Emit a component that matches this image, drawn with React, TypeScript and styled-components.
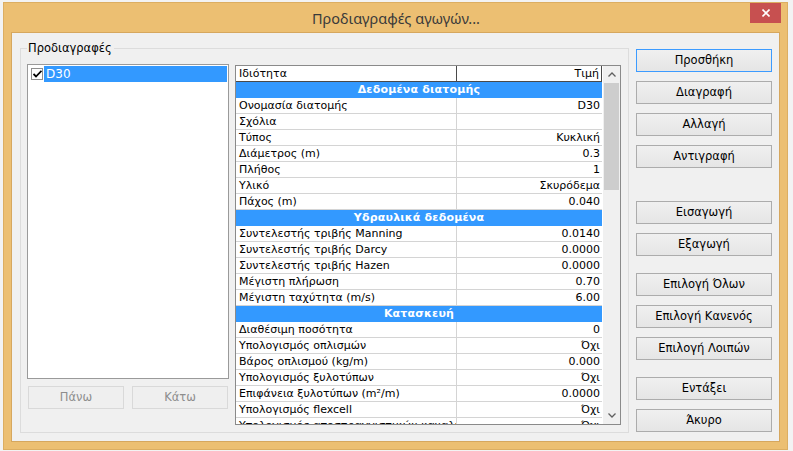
import React from "react";
import styled, { createGlobalStyle } from "styled-components";

const GlobalStyle = createGlobalStyle`
  html, body { margin: 0; padding: 0; width: 793px; height: 451px; overflow: hidden; background: #f0f0f0; }
  * { box-sizing: border-box; }
`;

const Page = styled.div`
  width: 793px;
  height: 451px;
  padding: 2px 0 0 3px;
  background: #f3f3f3;
`;

const Window = styled.div`
  width: 785px;
  height: 448px;
  background: #ecbf72;
  box-shadow: inset 0 0 0 1px #dcae62;
  display: flex;
  flex-direction: column;
  padding: 0 8px 8px 8px;
`;

const TitleBar = styled.div`
  height: 30px;
  display: grid;
  grid-template-columns: 1fr auto 1fr;
  align-items: center;
  margin: 0 -8px;
  padding: 0 7px 0 8px;
`;

const Title = styled.div`
  grid-column: 2;
  font-family: "Noto Sans", sans-serif;
  font-size: 14.5px;
  color: #3a3a3a;
  padding-top: 1px;
`;

const CloseButton = styled.div`
  grid-column: 3;
  justify-self: end;
  align-self: start;
  margin-top: 1px;
  width: 31px;
  height: 20px;
  background: #c75050;
  display: flex;
  align-items: center;
  justify-content: center;
`;

const Client = styled.div`
  flex: 1;
  background: #f0f0f0;
  border: 1px solid #d6a75e;
  display: flex;
  padding: 15px 0 0 8px;
  gap: 7px;
  font-family: "DejaVu Sans", sans-serif;
`;

const GroupBox = styled.div`
  position: relative;
  width: 609px;
  height: 385px;
  border: 1px solid #dcdcdc;
  display: flex;
  gap: 6px;
  padding: 15px 7px 7px 6px;
`;

const GroupLabel = styled.span`
  position: absolute;
  top: -8px;
  left: 6px;
  padding: 0 2px 0 1px;
  background: #f0f0f0;
  font-size: 11.5px;
  line-height: 14px;
  color: #000;
`;

const LeftColumn = styled.div`
  width: 202px;
  display: flex;
  flex-direction: column;
  gap: 7px;
  padding-bottom: 16px;
`;

const ListBox = styled.div`
  flex: 1;
  background: #fff;
  border: 1px solid #9a9a9a;
  padding: 1px 1px 0 3px;
`;

const ListItem = styled.div`
  display: flex;
  align-items: center;
  gap: 1px;
  height: 16px;
`;

const CheckBox = styled.div`
  width: 12px;
  height: 12px;
  border: 1px solid #8f8f8f;
  background: #fff;
  display: flex;
  align-items: center;
  justify-content: center;
  flex: none;
`;

const ItemLabel = styled.div<{ $selected?: boolean }>`
  flex: 1;
  height: 16px;
  background: ${(p) => (p.$selected ? "#3399ff" : "transparent")};
  color: ${(p) => (p.$selected ? "#fff" : "#000")};
  font-size: 12px;
  line-height: 16px;
  padding-left: 2px;
`;

const SmallButtonRow = styled.div`
  display: flex;
  gap: 8px;
  padding-left: 1px;
`;

const Button = styled.div<{ $disabled?: boolean; $default?: boolean; $width?: number; $gapBefore?: number }>`
  width: ${(p) => (p.$width ? `${p.$width}px` : "100%")};
  height: 23px;
  flex: none;
  margin-top: ${(p) => p.$gapBefore ?? 0}px;
  border: 1px solid ${(p) => (p.$disabled ? "#d9d9d9" : p.$default ? "#3c9bff" : "#acacac")};
  background: ${(p) => (p.$disabled ? "#efefef" : "linear-gradient(#f0f0f0, #e5e5e5)")};
  color: ${(p) => (p.$disabled ? "#8d8d8d" : "#000")};
  font-family: "DejaVu Sans", sans-serif;
  font-size: 11.5px;
  display: flex;
  align-items: center;
  justify-content: center;
  padding-bottom: 1px;
`;

const PropertyGrid = styled.div`
  width: 386px;
  height: 360px;
  margin-top: 1px;
  border: 1px solid #8a8a8a;
  background: #fff;
  display: flex;
`;

const GridContent = styled.div`
  width: 366px;
  overflow: hidden;
  display: flex;
  flex-direction: column;
`;

const Row = styled.div`
  display: flex;
  height: 16px;
  flex: none;
  border-bottom: 1px solid #d4d4d4;
  font-size: 11px;
  line-height: 15px;
  color: #000;
`;

const HeaderRow = styled(Row)`
  border-bottom: 1px solid #4a4a4a;
`;

const NameCell = styled.div<{ $header?: boolean }>`
  width: 221px;
  flex: none;
  padding-left: 3px;
  border-right: 1px solid ${(p) => (p.$header ? "#4a4a4a" : "#d4d4d4")};
  white-space: nowrap;
  overflow: hidden;
`;

const ValueCell = styled.div<{ $header?: boolean }>`
  flex: 1;
  text-align: right;
  padding-right: 2px;
  border-right: ${(p) => (p.$header ? "1px solid #4a4a4a" : "none")};
  white-space: nowrap;
`;

const CategoryRow = styled.div`
  height: 16px;
  flex: none;
  background: #3399ff;
  color: #fff;
  font-weight: bold;
  font-size: 11px;
  line-height: 16px;
  text-align: center;
  letter-spacing: 0.2px;
`;

const ScrollBar = styled.div`
  width: 18px;
  border-left: 1px solid #fff;
  background: #f0f0f0;
  display: flex;
  flex-direction: column;
`;

const ScrollArrow = styled.div`
  height: 17px;
  flex: none;
  display: flex;
  align-items: center;
  justify-content: center;
`;

const ScrollTrack = styled.div`
  flex: 1;
  padding: 0 1px;
`;

const ScrollThumb = styled.div`
  height: 107px;
  background: #cdcdcd;
`;

const RightColumn = styled.div`
  width: 136px;
  display: flex;
  flex-direction: column;
  gap: 9px;
  padding-top: 1px;
`;

type Item = { kind: "cat"; label: string } | { kind: "row"; name: string; value: string };

const items: Item[] = [
  { kind: "cat", label: "Δεδομένα διατομής" },
  { kind: "row", name: "Ονομασία διατομής", value: "D30" },
  { kind: "row", name: "Σχόλια", value: "" },
  { kind: "row", name: "Τύπος", value: "Κυκλική" },
  { kind: "row", name: "Διάμετρος (m)", value: "0.3" },
  { kind: "row", name: "Πλήθος", value: "1" },
  { kind: "row", name: "Υλικό", value: "Σκυρόδεμα" },
  { kind: "row", name: "Πάχος (m)", value: "0.040" },
  { kind: "cat", label: "Υδραυλικά δεδομένα" },
  { kind: "row", name: "Συντελεστής τριβής Manning", value: "0.0140" },
  { kind: "row", name: "Συντελεστής τριβής Darcy", value: "0.0000" },
  { kind: "row", name: "Συντελεστής τριβής Hazen", value: "0.0000" },
  { kind: "row", name: "Μέγιστη πλήρωση", value: "0.70" },
  { kind: "row", name: "Μέγιστη ταχύτητα (m/s)", value: "6.00" },
  { kind: "cat", label: "Κατασκευή" },
  { kind: "row", name: "Διαθέσιμη ποσότητα", value: "0" },
  { kind: "row", name: "Υπολογισμός οπλισμών", value: "Όχι" },
  { kind: "row", name: "Βάρος οπλισμού (kg/m)", value: "0.000" },
  { kind: "row", name: "Υπολογισμός ξυλοτύπων", value: "Όχι" },
  { kind: "row", name: "Επιφάνεια ξυλοτύπων (m²/m)", value: "0.0000" },
  { kind: "row", name: "Υπολογισμός flexcell", value: "Όχι" },
  { kind: "row", name: "Υπολογισμός αποστραγγιστικών καναλιών", value: "Όχι" },
];

const rightButtons: { label: string; gap?: number; def?: boolean }[] = [
  { label: "Προσθήκη", def: true },
  { label: "Διαγραφή" },
  { label: "Αλλαγή" },
  { label: "Αντιγραφή" },
  { label: "Εισαγωγή", gap: 24 },
  { label: "Εξαγωγή" },
  { label: "Επιλογή Όλων", gap: 8 },
  { label: "Επιλογή Κανενός" },
  { label: "Επιλογή Λοιπών" },
  { label: "Εντάξει", gap: 8 },
  { label: "Άκυρο" },
];

const Chevron = ({ up }: { up?: boolean }) => (
  <svg width="8" height="5" viewBox="0 0 8 5">
    <polyline
      points={up ? "0.5,4.5 4,1 7.5,4.5" : "0.5,0.5 4,4 7.5,0.5"}
      fill="none"
      stroke="#606060"
      strokeWidth="1.3"
    />
  </svg>
);

export default function App() {
  return (
    <>
      <GlobalStyle />
      <Page>
        <Window>
          <TitleBar>
            <Title>Προδιαγραφές αγωγών...</Title>
            <CloseButton>
              <svg width="8" height="8" viewBox="0 0 8 8">
                <path d="M0.5 0.5 L7.5 7.5 M7.5 0.5 L0.5 7.5" stroke="#fff" strokeWidth="1.6" />
              </svg>
            </CloseButton>
          </TitleBar>
          <Client>
            <GroupBox>
              <GroupLabel>Προδιαγραφές</GroupLabel>
              <LeftColumn>
                <ListBox>
                  <ListItem>
                    <CheckBox>
                      <svg width="9" height="8" viewBox="0 0 9 8">
                        <path d="M0.5 4 L3 6.5 L8.5 0.8" fill="none" stroke="#000" strokeWidth="1.8" />
                      </svg>
                    </CheckBox>
                    <ItemLabel $selected>D30</ItemLabel>
                  </ListItem>
                </ListBox>
                <SmallButtonRow>
                  <Button $disabled $width={96}>Πάνω</Button>
                  <Button $disabled $width={96}>Κάτω</Button>
                </SmallButtonRow>
              </LeftColumn>
              <PropertyGrid>
                <GridContent>
                  <HeaderRow>
                    <NameCell $header>Ιδιότητα</NameCell>
                    <ValueCell $header>Τιμή</ValueCell>
                  </HeaderRow>
                  {items.map((it, i) =>
                    it.kind === "cat" ? (
                      <CategoryRow key={i}>{it.label}</CategoryRow>
                    ) : (
                      <Row key={i}>
                        <NameCell>{it.name}</NameCell>
                        <ValueCell>{it.value}</ValueCell>
                      </Row>
                    )
                  )}
                </GridContent>
                <ScrollBar>
                  <ScrollArrow>
                    <Chevron up />
                  </ScrollArrow>
                  <ScrollTrack>
                    <ScrollThumb />
                  </ScrollTrack>
                  <ScrollArrow>
                    <Chevron />
                  </ScrollArrow>
                </ScrollBar>
              </PropertyGrid>
            </GroupBox>
            <RightColumn>
              {rightButtons.map((b) => (
                <Button key={b.label} $default={b.def} $gapBefore={b.gap}>
                  {b.label}
                </Button>
              ))}
            </RightColumn>
          </Client>
        </Window>
      </Page>
    </>
  );
}
